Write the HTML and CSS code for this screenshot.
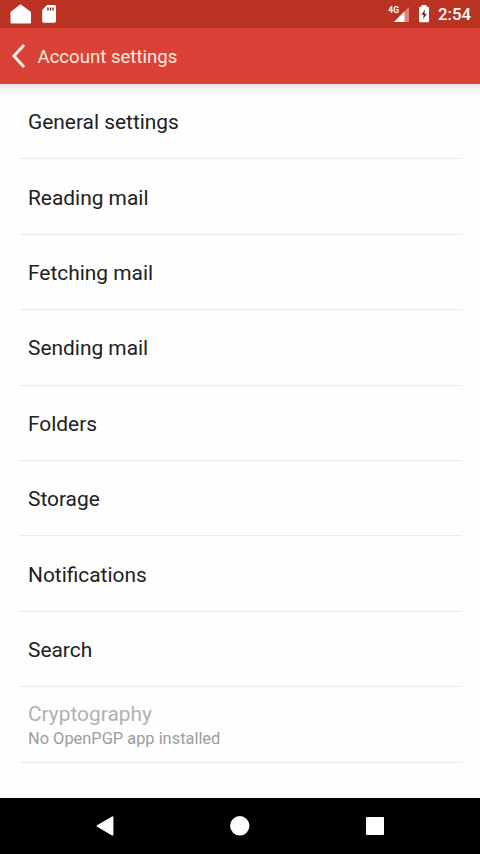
FILE: index.html
```html
<!DOCTYPE html>
<html lang="en">
<head>
<meta charset="utf-8">
<title>Account settings</title>
<link rel="stylesheet" href="styles.css">
</head>
<body>
<div class="screen">
  <div class="status">
    <svg class="status-left" width="70" height="28" viewBox="0 0 70 28" fill="#fff">
      <path d="M20.5 4.2 31 12v10.500q0 1-1 1H11.500q-1 0-1-1V12z"/>
      <path d="M47 5h7.500q1.500 0 1.500 1.500v14.500q0 1.700-1.500 1.700H43.500q-1.300 0-1.300-1.700V10z"/>
      <path d="M47.200 7.500h1.500v3h-1.500zM49.700 7.500h1.500v3h-1.500zM52.200 7.500h1.500v3h-1.500z" fill="#783b36"/>
    </svg>
    <div class="status-right">
      <span class="network">4G</span>
      <svg width="46" height="28" viewBox="0 0 46 28">
        <path d="M21 7v15H6z" fill="#df827a"/>
        <path d="M16.500 11.500V22H6z" fill="#fff"/>
        <path d="M33.500 5h5v1.700H40q1 0 1 1V21q0 1.200-1 1.200h-8q-1 0-1-1.200V7.700q0-1 1-1h1.500z" fill="#fff"/>
        <path d="M37 9.500 33.500 14.800h2.300L35 19.300l3.800-5.600h-2.400z" fill="#5f1a1c"/>
      </svg>
      <span class="clock">2:54</span>
    </div>
  </div>
  <header class="bar">
    <svg class="back" width="16" height="28" viewBox="0 0 16 28"><path d="M14 3 4 14l10 11" fill="none" stroke="#fff1e9" stroke-width="3"/></svg>
    <h1 class="title">Account settings</h1>
  </header>
  <main class="list">
    <div class="row"><span class="name">General settings</span></div>
    <div class="row"><span class="name">Reading mail</span></div>
    <div class="row"><span class="name">Fetching mail</span></div>
    <div class="row"><span class="name">Sending mail</span></div>
    <div class="row"><span class="name">Folders</span></div>
    <div class="row"><span class="name">Storage</span></div>
    <div class="row"><span class="name">Notifications</span></div>
    <div class="row"><span class="name">Search</span></div>
    <div class="row disabled"><span class="name">Cryptography</span><span class="summary">No OpenPGP app installed</span></div>
  </main>
  <nav class="nav">
    <svg width="480" height="56" viewBox="0 0 480 56" fill="#fff">
      <path d="M112.500 19.300v17.400L97.500 28z" stroke="#fff" stroke-width="1.800" stroke-linejoin="round"/>
      <circle cx="239.800" cy="27.800" r="9.700"/>
      <rect x="366" y="19" width="18" height="18" rx="1"/>
    </svg>
  </nav>
</div>
</body>
</html>
```
FILE: styles.css
```css
body {
  margin: 0;
  font-family: Roboto, "Liberation Sans", sans-serif;
}

.screen {
  display: flex;
  flex-direction: column;
  width: 480px;
  height: 854px;
  overflow: hidden;
  background: #fefefe;
}

svg {
  display: block;
}

.status {
  display: flex;
  justify-content: space-between;
  flex: none;
  height: 28px;
  background: #b93222;
  color: #fff;
}

.status-right {
  display: flex;
  padding-right: 9px;
}

.network {
  margin-right: -11px;
  padding-top: 5px;
  font-size: 8.5px;
  font-weight: 700;
  line-height: 10px;
}

.clock {
  padding-left: 4px;
  font-size: 16.8px;
  font-weight: 500;
  line-height: 29px;
}

.bar {
  display: flex;
  align-items: center;
  flex: none;
  box-sizing: border-box;
  height: 56px;
  padding-left: 10px;
  background: #db4237;
  border-bottom: 1px solid #d0483d;
}

.title {
  margin: 2px 0 0 11.5px;
  color: #ffe9df;
  font-size: 18.6px;
  font-weight: 400;
  line-height: 24px;
}

.list {
  flex: 1;
  padding: 0 18px 0 19px;
  background: linear-gradient(#dedede 0, #f3f3f3 4px, #fafafa 9px, #fefefe 16px);
}

.row {
  display: flex;
  flex-direction: column;
  justify-content: center;
  box-sizing: border-box;
  height: 75.42px;
  padding-left: 9px;
  border-bottom: 1px solid #ebebeb;
}

.name {
  margin-top: 2px;
  color: #212121;
  font-size: 20.9px;
  line-height: 26px;
}

.summary {
  color: #9c9c9c;
  font-size: 16.4px;
  line-height: 24px;
}

.disabled .name {
  margin-top: 3px;
  color: #b1b1b1;
}

.nav {
  flex: none;
  height: 56px;
  background: #000;
}
```
